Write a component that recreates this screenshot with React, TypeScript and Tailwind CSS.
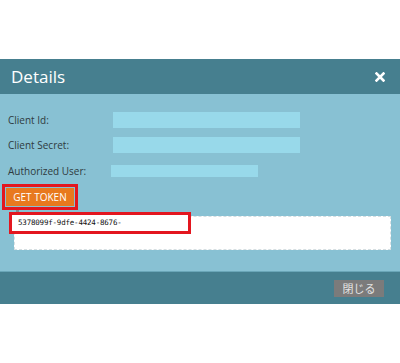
const font = { fontFamily: '"Open Sans", "Noto Sans CJK JP", sans-serif' };

function Row({ label, inputClass }: { label: string; inputClass: string }) {
  return (
    <div className="flex items-center h-[16px]">
      <span className="w-[105px] pl-[8px] text-[10px] text-[#2f3b40]">{label}</span>
      <div className={inputClass} />
    </div>
  );
}

export default function App() {
  return (
    <div className="w-[400px] h-[363px] bg-white flex flex-col" style={font}>
      <div className="h-[59px]" />
      <div className="h-[35px] bg-[#467f8f] flex items-center justify-between pl-[11px] pr-[15px]">
        <span className="text-white text-[17px] leading-none">Details</span>
        <svg width="10" height="10" viewBox="0 0 10 10">
          <path d="M1.5 1.5 L8.5 8.5 M8.5 1.5 L1.5 8.5" stroke="white" strokeWidth="2.6" strokeLinecap="square" />
        </svg>
      </div>
      <div className="h-[177px] bg-[#88c1d3] flex flex-col pt-[18px]">
        <div className="flex flex-col gap-[9px]">
          <Row label="Client Id:" inputClass="ml-[8px] w-[187px] h-[16px] bg-[#98d9ea]" />
          <Row label="Client Secret:" inputClass="ml-[8px] w-[187px] h-[16px] bg-[#98d9ea]" />
          <div className="flex items-center h-[16px] mt-[1px]">
            <span className="w-[105px] pl-[8px] text-[10px] text-[#2f3b40]">Authorized User:</span>
            <div className="ml-[6px] w-[147px] h-[12px] bg-[#98d9ea]" />
          </div>
        </div>
        <div className="ml-[2px] mt-[5px] w-[76px] h-[26px] border-[3px] border-[#e3161f] p-[1px] flex">
          <button className="flex-1 bg-[#e8791e] text-white text-[10px] leading-none flex items-center justify-center">
            GET TOKEN
          </button>
        </div>
        <div className="ml-[16px] w-[3px] h-[5px] bg-[#7d8b90]" />
        <div className="relative ml-[14px] mt-[1px] w-[377px] h-[34px] bg-white border border-dashed border-[#d6dfe2]">
          <div className="absolute left-[-6px] top-[-5px] w-[182px] h-[22px] border-[3px] border-[#e3161f] bg-white flex items-center pl-[6px]">
            <span className="text-[7.5px] text-[#111] tracking-[-0.2px]" style={{ fontFamily: '"DejaVu Sans Mono", monospace' }}>
              5378099f-9dfe-4424-8676-
            </span>
          </div>
        </div>
      </div>
      <div className="h-[1px] bg-[#6aa6b8]" />
      <div className="h-[32px] bg-[#467f8f] flex items-center justify-end pr-[16px]">
        <button className="w-[50px] h-[17px] bg-[#7b7b7b] text-[#e4e4e4] text-[11px] leading-none flex items-center justify-center">
          閉じる
        </button>
      </div>
      <div className="flex-1" />
    </div>
  );
}
